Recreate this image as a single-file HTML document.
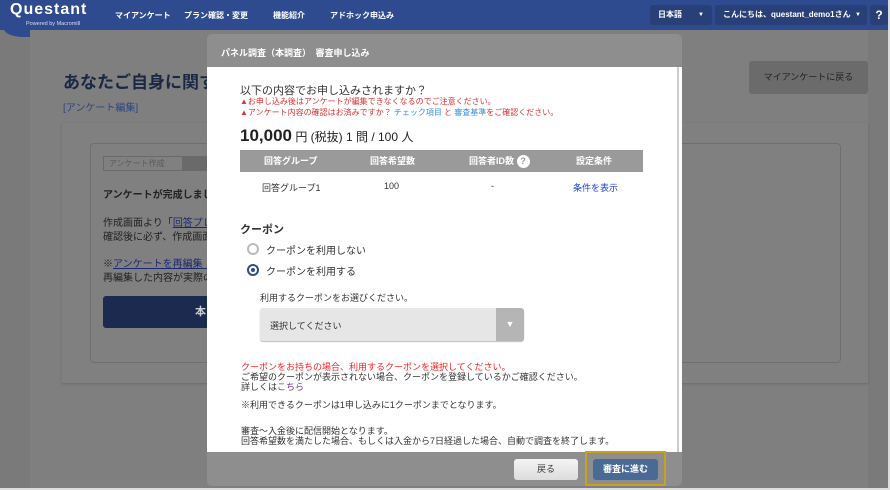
<!DOCTYPE html>
<html><head><meta charset="utf-8"><style>
*{margin:0;padding:0;box-sizing:border-box}
body{width:890px;height:490px;overflow:hidden;background:#7a7a7a;font-family:"Liberation Sans","Noto Sans CJK JP",sans-serif;position:relative;color:#333}
.abs{position:absolute}
.nav{left:0;top:0;width:890px;height:30px;background:#2d4b8e;}
.logo{left:4px;top:0;width:84px;height:37px;background:#2d4b8e;border-radius:0 0 20px 20px/0 0 8px 8px}
.nav .m{position:absolute;top:10px;color:#fff;font-size:8px;font-weight:bold}
.pill{background:#283f77;border-radius:3px;height:20px;top:5px;color:#fff;font-size:8px;font-weight:bold;line-height:20px}
.txt{font-size:10px;color:#222}
</style></head><body>
<div class="abs nav">
<span class="m" style="left:115px">マイアンケート</span>
<span class="m" style="left:184px">プラン確認・変更</span>
<span class="m" style="left:273px">機能紹介</span>
<span class="m" style="left:330px">アドホック申込み</span>
<div class="abs pill" style="left:650px;width:62px;padding-left:8px">日本語<span style="position:absolute;right:8px;font-size:6px">▼</span></div>
<div class="abs pill" style="left:715px;width:152px;padding-left:8px">こんにちは、questant_demo1さん<span style="position:absolute;right:6px;font-size:6px">▼</span></div>
<div class="abs pill" style="left:870px;width:18px;text-align:center;font-size:12px">?</div>
</div>
<div class="abs logo"><div style="position:absolute;left:6px;top:1px;color:#fff;font-size:16px;font-weight:bold;letter-spacing:1px">Questant</div><div style="position:absolute;left:22px;top:21px;color:#dde;font-size:5.5px">Powered by Macromill</div></div>
<!-- background page -->
<div class="abs" style="left:30px;top:30px;width:838px;height:460px;background:#7f7f7f"></div>
<div class="abs" style="left:62px;top:123px;width:806px;height:260px;background:#808080;box-shadow:0 1px 2px #6a6a6a"></div>
<div class="abs" style="left:90px;top:143px;width:751px;height:220px;border:1px solid #6f6f6f;border-radius:4px"></div>
<div class="abs" style="left:63px;top:68px;font-size:17px;font-weight:bold;color:#1a2846">あなたご自身に関す</div>
<div class="abs" style="left:63px;top:99px;font-size:10px;color:#2a4780">[アンケート編集]</div>
<div class="abs" style="left:749px;top:61px;width:119px;height:33px;background:#6b6b6b;border-radius:3px;font-size:9px;color:#222;text-align:center;line-height:33px">マイアンケートに戻る</div>
<div class="abs" style="left:103px;top:156px;width:80px;height:15px;border:1px solid #6a6a6a;font-size:8px;color:#5a5a5a;line-height:13px;padding-left:5px">アンケート作成</div>
<div class="abs" style="left:183px;top:156px;width:30px;height:15px;background:#6a6a6a"></div>
<div class="abs txt" style="left:103px;top:186px;font-weight:bold">アンケートが完成しまし</div>
<div class="abs txt" style="left:103px;top:214px">作成画面より「<u style="color:#1b2a70">回答プレ</u></div>
<div class="abs txt" style="left:103px;top:228px">確認後に必ず、作成画面</div>
<div class="abs txt" style="left:103px;top:255px">※<u style="color:#1b2a70">アンケートを再編集（</u></div>
<div class="abs txt" style="left:103px;top:269px">再編集した内容が実際の</div>
<div class="abs" style="left:103px;top:296px;width:110px;height:32px;background:#1b2a4f;border-radius:3px;color:#ccc;font-size:11px;font-weight:bold;line-height:32px;padding-left:92px">本</div>
<!-- modal -->
<div class="abs" style="left:207px;top:34px;width:475px;height:452px;background:#8e8e8e;border-radius:5px"></div>
<div class="abs" style="left:221px;top:46px;font-size:9px;font-weight:bold;color:#fff">パネル調査（本調査）　審査申し込み</div>
<div class="abs" style="left:207px;top:67px;width:475px;height:385px;background:#fff"></div>
<div class="abs" style="left:677px;top:67px;width:2px;height:385px;background:#ccc"></div>
<div class="abs" style="left:240px;top:82px;font-size:11px;color:#333">以下の内容でお申し込みされますか？</div>
<div class="abs" style="left:240px;top:96px;font-size:8px;color:#d33">▲お申し込み後はアンケートが編集できなくなるのでご注意ください。</div>
<div class="abs" style="left:240px;top:107px;font-size:8px;color:#d33">▲アンケート内容の確認はお済みですか？ <span style="color:#3a8fe0">チェック項目</span> と <span style="color:#3a8fe0">審査基準</span>をご確認ください。</div>
<div class="abs" style="left:240px;top:126px;font-size:12px;color:#222"><b style="font-size:17px">10,000</b> 円 (税抜) 1 問 / 100 人</div>
<div class="abs" style="left:240px;top:150px;width:403px;height:22px;background:#9a9a9a;color:#fff;font-size:9px;font-weight:bold;line-height:22px">
<span class="abs" style="left:24px">回答グループ</span><span class="abs" style="left:130px">回答希望数</span><span class="abs" style="left:229px">回答者ID数 <span style="display:inline-block;width:13px;height:13px;border-radius:50%;background:#fff;color:#9a9a9a;text-align:center;line-height:13px;font-size:9px">?</span></span><span class="abs" style="left:336px">設定条件</span></div>
<div class="abs" style="left:262px;top:181px;font-size:9px;color:#333">回答グループ1</div>
<div class="abs" style="left:384px;top:181px;font-size:9px;color:#333">100</div>
<div class="abs" style="left:491px;top:181px;font-size:9px;color:#333">-</div>
<div class="abs" style="left:573px;top:181px;font-size:9px;color:#1a3fd8">条件を表示</div>
<div class="abs" style="left:240px;top:221px;font-size:11px;font-weight:bold;color:#333">クーポン</div>
<div class="abs" style="left:247px;top:243px;width:12px;height:12px;border-radius:50%;border:2px solid #bbb"></div>
<div class="abs" style="left:266px;top:242px;font-size:10px;color:#333">クーポンを利用しない</div>
<div class="abs" style="left:247px;top:264px;width:12px;height:12px;border-radius:50%;border:2px solid #2d4b8e"><div style="margin:2px;width:4px;height:4px;border-radius:50%;background:#2d4b8e"></div></div>
<div class="abs" style="left:266px;top:263px;font-size:10px;color:#333">クーポンを利用する</div>
<div class="abs" style="left:260px;top:291px;font-size:9px;color:#333">利用するクーポンをお選びください。</div>
<div class="abs" style="left:260px;top:308px;width:264px;height:33px;background:#e6e6e6;border-radius:3px;box-shadow:0 1px 1px #bbb"><span class="abs" style="left:10px;top:11px;font-size:9px;color:#333">選択してください</span><div class="abs" style="right:0;top:0;width:28px;height:33px;background:#b5b5b5;border-radius:0 3px 3px 0;color:#fff;font-size:9px;text-align:center;line-height:33px">▼</div></div>
<div class="abs" style="left:241px;top:362px;font-size:9px;color:#f22;line-height:10px">クーポンをお持ちの場合、利用するクーポンを選択してください。</div>
<div class="abs" style="left:241px;top:372px;font-size:9px;color:#333;line-height:10px">ご希望のクーポンが表示されない場合、クーポンを登録しているかご確認ください。<br>詳しくは<span style="color:#6a3aa0">こちら</span></div>
<div class="abs" style="left:241px;top:398px;font-size:9px;color:#333">※利用できるクーポンは1申し込みに1クーポンまでとなります。</div>
<div class="abs" style="left:241px;top:426px;font-size:9px;color:#333;line-height:10px">審査～入金後に配信開始となります。<br>回答希望数を満たした場合、もしくは入金から7日経過した場合、自動で調査を終了します。</div>
<div class="abs" style="left:514px;top:459px;width:64px;height:21px;background:linear-gradient(#f4f4f4,#dcdcdc);border-radius:3px;font-size:9px;text-align:center;line-height:21px;color:#333">戻る</div>
<div class="abs" style="left:585px;top:451px;width:81px;height:35px;border:2px solid #c8a21e"></div>
<div class="abs" style="left:593px;top:459px;width:65px;height:21px;background:#4a6a96;border-radius:3px;font-size:9px;font-weight:bold;text-align:center;line-height:21px;color:#fff">審査に進む</div>
<div class="abs" style="left:888px;top:0;width:2px;height:490px;background:#ddd"></div>
<div class="abs" style="left:0;top:488px;width:890px;height:2px;background:#ddd"></div>
</body></html>
